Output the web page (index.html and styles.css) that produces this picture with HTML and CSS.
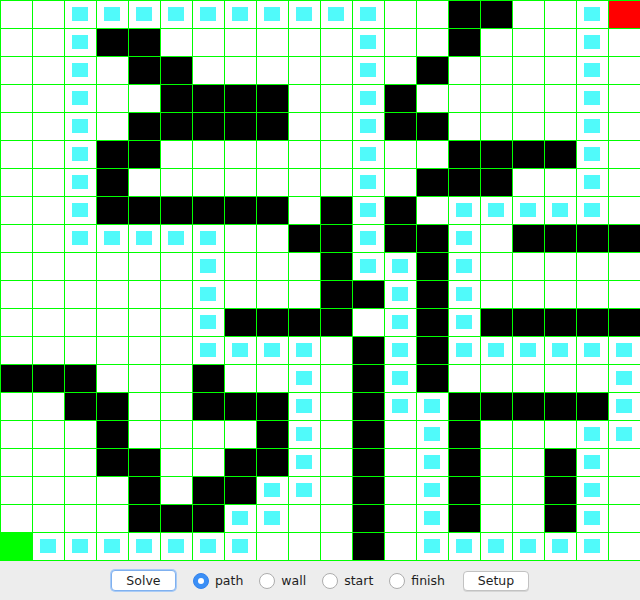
FILE: index.html
```html
<!DOCTYPE html>
<html>
<head>
<meta charset="utf-8">
<title>Maze</title>
<link rel="stylesheet" href="styles.css">
</head>
<body>
<div class="grid">
<span></span><span></span><span class="p"></span><span class="p"></span><span class="p"></span><span class="p"></span><span class="p"></span><span class="p"></span><span class="p"></span><span class="p"></span><span class="p"></span><span class="p"></span><span></span><span></span><span class="w"></span><span class="w"></span><span></span><span></span><span class="p"></span><span class="f"></span>
<span></span><span></span><span class="p"></span><span class="w"></span><span class="w"></span><span></span><span></span><span></span><span></span><span></span><span></span><span class="p"></span><span></span><span></span><span class="w"></span><span></span><span></span><span></span><span class="p"></span><span></span>
<span></span><span></span><span class="p"></span><span></span><span class="w"></span><span class="w"></span><span></span><span></span><span></span><span></span><span></span><span class="p"></span><span></span><span class="w"></span><span></span><span></span><span></span><span></span><span class="p"></span><span></span>
<span></span><span></span><span class="p"></span><span></span><span></span><span class="w"></span><span class="w"></span><span class="w"></span><span class="w"></span><span></span><span></span><span class="p"></span><span class="w"></span><span></span><span></span><span></span><span></span><span></span><span class="p"></span><span></span>
<span></span><span></span><span class="p"></span><span></span><span class="w"></span><span class="w"></span><span class="w"></span><span class="w"></span><span class="w"></span><span></span><span></span><span class="p"></span><span class="w"></span><span class="w"></span><span></span><span></span><span></span><span></span><span class="p"></span><span></span>
<span></span><span></span><span class="p"></span><span class="w"></span><span class="w"></span><span></span><span></span><span></span><span></span><span></span><span></span><span class="p"></span><span></span><span></span><span class="w"></span><span class="w"></span><span class="w"></span><span class="w"></span><span class="p"></span><span></span>
<span></span><span></span><span class="p"></span><span class="w"></span><span></span><span></span><span></span><span></span><span></span><span></span><span></span><span class="p"></span><span></span><span class="w"></span><span class="w"></span><span class="w"></span><span></span><span></span><span class="p"></span><span></span>
<span></span><span></span><span class="p"></span><span class="w"></span><span class="w"></span><span class="w"></span><span class="w"></span><span class="w"></span><span class="w"></span><span></span><span class="w"></span><span class="p"></span><span class="w"></span><span></span><span class="p"></span><span class="p"></span><span class="p"></span><span class="p"></span><span class="p"></span><span></span>
<span></span><span></span><span class="p"></span><span class="p"></span><span class="p"></span><span class="p"></span><span class="p"></span><span></span><span></span><span class="w"></span><span class="w"></span><span class="p"></span><span class="w"></span><span class="w"></span><span class="p"></span><span></span><span class="w"></span><span class="w"></span><span class="w"></span><span class="w"></span>
<span></span><span></span><span></span><span></span><span></span><span></span><span class="p"></span><span></span><span></span><span></span><span class="w"></span><span class="p"></span><span class="p"></span><span class="w"></span><span class="p"></span><span></span><span></span><span></span><span></span><span></span>
<span></span><span></span><span></span><span></span><span></span><span></span><span class="p"></span><span></span><span></span><span></span><span class="w"></span><span class="w"></span><span class="p"></span><span class="w"></span><span class="p"></span><span></span><span></span><span></span><span></span><span></span>
<span></span><span></span><span></span><span></span><span></span><span></span><span class="p"></span><span class="w"></span><span class="w"></span><span class="w"></span><span class="w"></span><span></span><span class="p"></span><span class="w"></span><span class="p"></span><span class="w"></span><span class="w"></span><span class="w"></span><span class="w"></span><span class="w"></span>
<span></span><span></span><span></span><span></span><span></span><span></span><span class="p"></span><span class="p"></span><span class="p"></span><span class="p"></span><span></span><span class="w"></span><span class="p"></span><span class="w"></span><span class="p"></span><span class="p"></span><span class="p"></span><span class="p"></span><span class="p"></span><span class="p"></span>
<span class="w"></span><span class="w"></span><span class="w"></span><span></span><span></span><span></span><span class="w"></span><span></span><span></span><span class="p"></span><span></span><span class="w"></span><span class="p"></span><span class="w"></span><span></span><span></span><span></span><span></span><span></span><span class="p"></span>
<span></span><span></span><span class="w"></span><span class="w"></span><span></span><span></span><span class="w"></span><span class="w"></span><span class="w"></span><span class="p"></span><span></span><span class="w"></span><span class="p"></span><span class="p"></span><span class="w"></span><span class="w"></span><span class="w"></span><span class="w"></span><span class="w"></span><span class="p"></span>
<span></span><span></span><span></span><span class="w"></span><span></span><span></span><span></span><span></span><span class="w"></span><span class="p"></span><span></span><span class="w"></span><span></span><span class="p"></span><span class="w"></span><span></span><span></span><span></span><span class="p"></span><span class="p"></span>
<span></span><span></span><span></span><span class="w"></span><span class="w"></span><span></span><span></span><span class="w"></span><span class="w"></span><span class="p"></span><span></span><span class="w"></span><span></span><span class="p"></span><span class="w"></span><span></span><span></span><span class="w"></span><span class="p"></span><span></span>
<span></span><span></span><span></span><span></span><span class="w"></span><span></span><span class="w"></span><span class="w"></span><span class="p"></span><span class="p"></span><span></span><span class="w"></span><span></span><span class="p"></span><span class="w"></span><span></span><span></span><span class="w"></span><span class="p"></span><span></span>
<span></span><span></span><span></span><span></span><span class="w"></span><span class="w"></span><span class="w"></span><span class="p"></span><span class="p"></span><span></span><span></span><span class="w"></span><span></span><span class="p"></span><span class="w"></span><span></span><span></span><span class="w"></span><span class="p"></span><span></span>
<span class="s"></span><span class="p"></span><span class="p"></span><span class="p"></span><span class="p"></span><span class="p"></span><span class="p"></span><span class="p"></span><span></span><span></span><span></span><span class="w"></span><span></span><span class="p"></span><span class="p"></span><span class="p"></span><span class="p"></span><span class="p"></span><span class="p"></span><span></span>
</div>
<div class="controls">
  <button class="btn btn-default">Solve</button>
  <label class="radio"><span class="circle on"></span>path</label>
  <label class="radio"><span class="circle"></span>wall</label>
  <label class="radio"><span class="circle"></span>start</label>
  <label class="radio"><span class="circle"></span>finish</label>
  <button class="btn btn-setup">Setup</button>
</div>
</body>
</html>
```
FILE: styles.css
```css
html, body {
  margin: 0;
  padding: 0;
  background: #ededed;
  font-family: "DejaVu Sans", "Liberation Sans", sans-serif;
}

.grid {
  display: grid;
  grid-template-columns: repeat(20, 32px);
  grid-template-rows: repeat(20, 28px);
  width: 640px;
  border-bottom: 1px solid #00ff00;
  background: #ffffff;
}

.grid span {
  display: block;
  box-sizing: border-box;
  border-left: 1px solid #00ff00;
  border-top: 1px solid #00ff00;
  background: #ffffff;
}

.grid .w { background: #000000; }
.grid .f { background: #ff0000; }
.grid .s { background: #00ff00; }

.grid .p::after {
  content: "";
  display: block;
  width: 16px;
  height: 14px;
  margin: 6px 0 0 7px;
  background: #50fafa;
}

.controls {
  height: 39px;
  display: flex;
  align-items: center;
  justify-content: center;
  font-size: 12.5px;
  color: #1e1e1e;
}

.btn {
  box-sizing: border-box;
  height: 20px;
  padding: 0;
  font-family: "DejaVu Sans", "Liberation Sans", sans-serif;
  font-size: 12.5px;
  color: #1e1e1e;
  background: #ffffff;
  border: 1px solid #c2c2c2;
  border-radius: 4px;
  box-shadow: 0 1px 0 #d6d6d6;
  line-height: 17px;
}

.btn-default {
  width: 65px;
  height: 21px;
  border: 1px solid #7fb0ef;
  box-shadow: 0 0 0 1px #a9cbf6;
  margin-right: 17px;
}

.btn-setup {
  width: 66px;
  margin-left: 18px;
}

.radio {
  display: flex;
  align-items: center;
  margin-right: 16px;
}

.radio:nth-of-type(4) { margin-right: 0; }

.circle {
  box-sizing: border-box;
  width: 16px;
  height: 16px;
  margin-right: 6px;
  border-radius: 50%;
  background: #ffffff;
  border: 1px solid #adadad;
  display: flex;
  align-items: center;
  justify-content: center;
}

.circle.on {
  background: #3b8ff6;
  border-color: #3483ec;
}

.circle.on::after {
  content: "";
  width: 6px;
  height: 6px;
  border-radius: 50%;
  background: #ffffff;
}
```
